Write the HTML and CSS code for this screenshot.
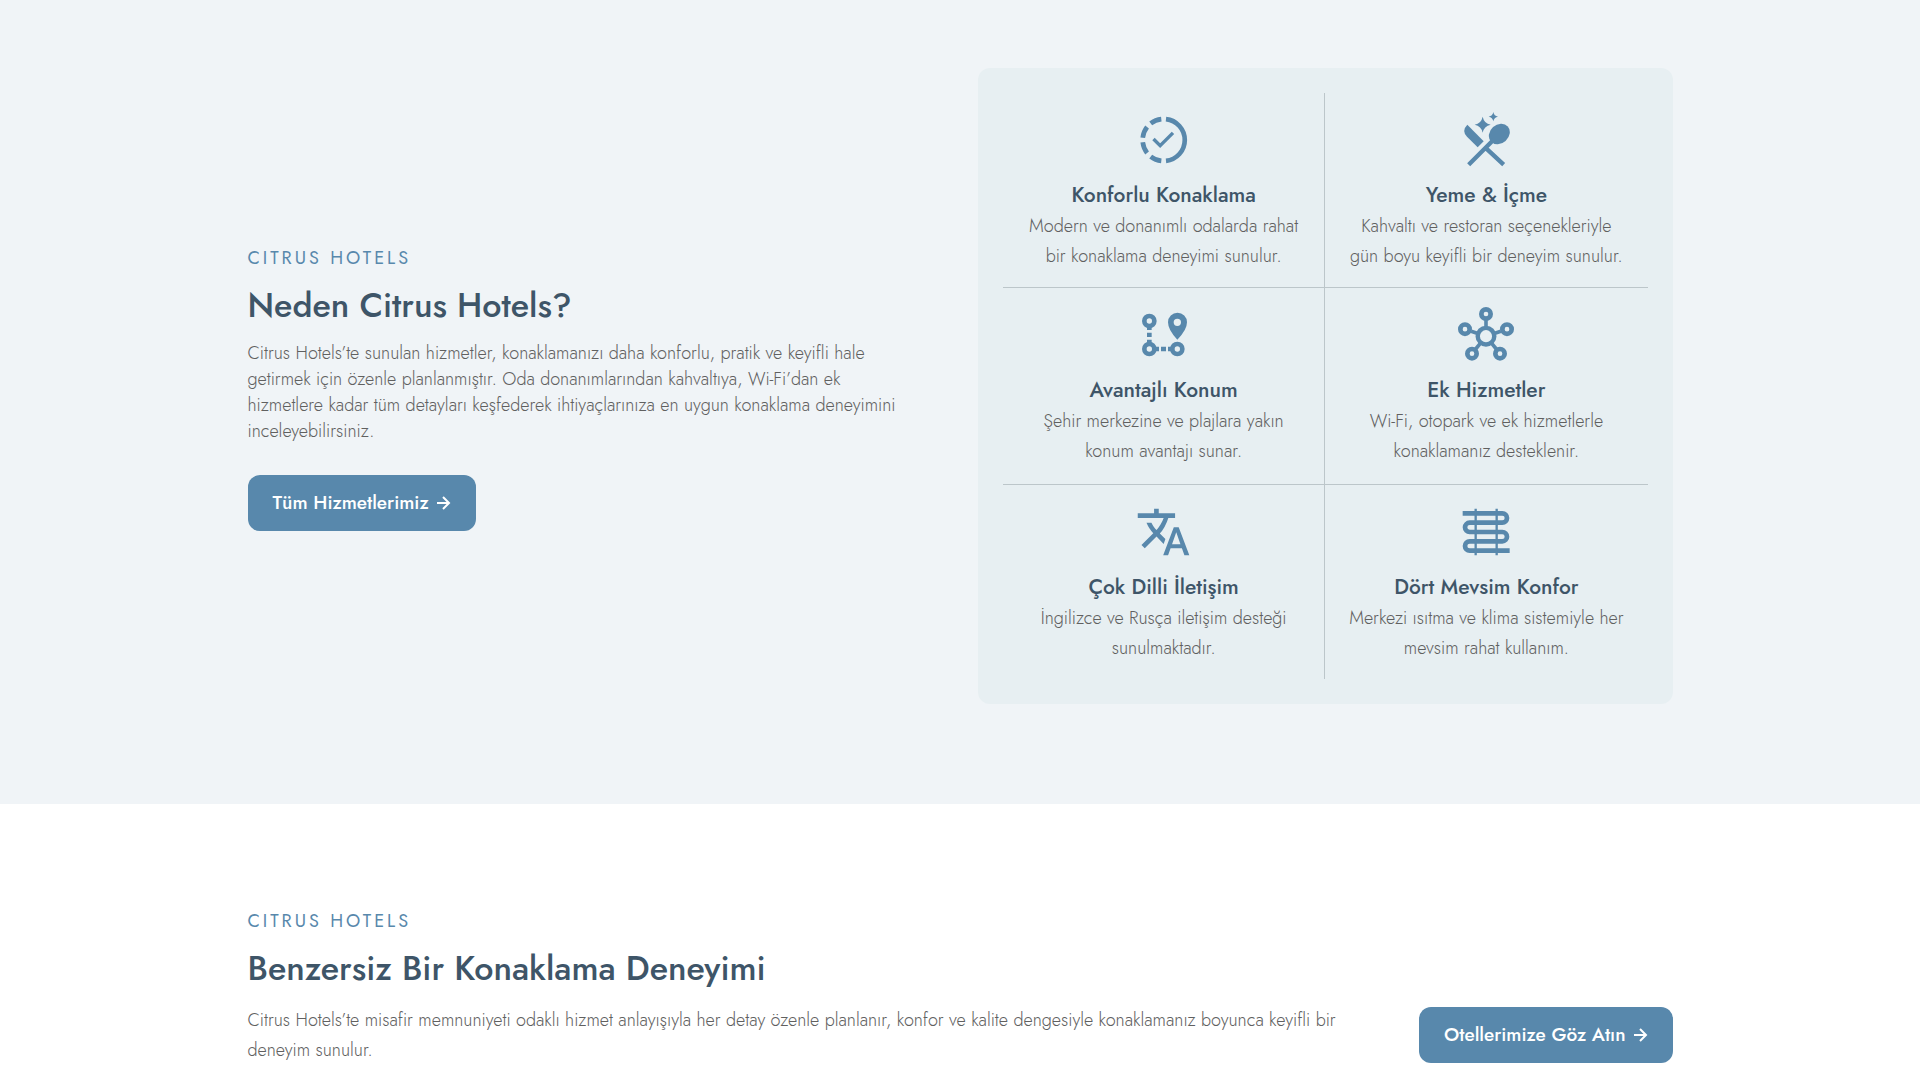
FILE: index.html
```html
<!DOCTYPE html>
<html lang="tr">
<head>
<meta charset="utf-8">
<meta name="viewport" content="width=device-width, initial-scale=1">
<title>Citrus Hotels</title>
<link rel="stylesheet" href="styles.css">
</head>
<body>
<main>
  <section class="why">
    <div class="container why-grid">
      <div class="intro">
        <p class="eyebrow">CITRUS HOTELS</p>
        <h2 class="heading">Neden Citrus Hotels?</h2>
        <p class="lead">Citrus Hotels’te sunulan hizmetler, konaklamanızı daha konforlu, pratik ve keyifli hale getirmek için özenle planlanmıştır. Oda donanımlarından kahvaltıya, Wi-Fi’dan ek hizmetlere kadar tüm detayları keşfederek ihtiyaçlarınıza en uygun konaklama deneyimini inceleyebilirsiniz.</p>
        <a class="button" href="#">Tüm Hizmetlerimiz
          <svg class="arrow" viewBox="0 0 14 14" aria-hidden="true"><path d="M0 7H12M6 1L12 7L6 13"/></svg>
        </a>
      </div>
      <ul class="features">
        <li class="feature">
          <svg class="icon" viewBox="6 0 960 960" aria-hidden="true">
            <g class="line">
              <path stroke-width="80" d="M520 122A360 360 0 0 1 520 838M440 122A360 360 0 0 0 258 196M196 258A360 360 0 0 0 122 440M122 520A360 360 0 0 0 196 702M258 764A360 360 0 0 0 440 838"/>
              <path stroke-width="58" d="M306 464L420 578L640 358"/>
            </g>
          </svg>
          <h3 class="feature-title">Konforlu Konaklama</h3>
          <p class="feature-text">Modern ve donanımlı odalarda rahat bir konaklama deneyimi sunulur.</p>
        </li>
        <li class="feature">
          <svg class="icon" viewBox="54 51 168 168" aria-hidden="true">
            <path d="M82 89L131 139L113 157L81 125Q64 107 82 89Z"/>
            <ellipse cx="178" cy="117" rx="34" ry="28" transform="rotate(-42 178 117)"/>
            <path class="line" stroke-width="13" d="M160 135L86 209M136 158L191 209"/>
            <path d="M128 65Q132 85 152 89Q132 93 128 113Q124 93 104 89Q124 85 128 65ZM160 51Q162 63 174 65Q162 67 160 79Q158 67 146 65Q158 63 160 51Z"/>
          </svg>
          <h3 class="feature-title">Yeme &amp; İçme</h3>
          <p class="feature-text">Kahvaltı ve restoran seçenekleriyle gün boyu keyifli bir deneyim sunulur.</p>
        </li>
        <li class="feature">
          <svg class="icon" viewBox="48 36 168 168" aria-hidden="true">
            <g class="line" stroke-width="14">
              <circle cx="88" cy="78" r="15"/>
              <circle cx="88" cy="162" r="15"/>
              <circle cx="172" cy="162" r="15"/>
              <path d="M88 92V105M88 113V126M88 134V148M102 162H117M123 162H138M144 162H158"/>
            </g>
            <path fill-rule="evenodd" d="M172 134Q144 105 144 82A28 28 0 0 1 201 82Q201 105 172 134ZM172 71A11 11 0 1 0 172 93A11 11 0 1 0 172 71Z"/>
          </svg>
          <h3 class="feature-title">Avantajlı Konum</h3>
          <p class="feature-text">Şehir merkezine ve plajlara yakın konum avantajı sunar.</p>
        </li>
        <li class="feature">
          <svg class="icon" viewBox="0 0 960 960" aria-hidden="true">
            <g class="line">
              <circle cx="480" cy="500" r="142" stroke-width="76"/>
              <circle cx="480" cy="120" r="80" stroke-width="80"/>
              <circle cx="120" cy="380" r="80" stroke-width="80"/>
              <circle cx="840" cy="380" r="80" stroke-width="80"/>
              <circle cx="240" cy="800" r="80" stroke-width="80"/>
              <circle cx="720" cy="800" r="80" stroke-width="80"/>
              <path stroke-width="62" d="M480 220V340M225 415L340 454M735 415L620 454M304 720L382 622M656 720L578 622"/>
            </g>
          </svg>
          <h3 class="feature-title">Ek Hizmetler</h3>
          <p class="feature-text">Wi-Fi, otopark ve ek hizmetlerle konaklamanız desteklenir.</p>
        </li>
        <li class="feature">
          <svg class="icon" viewBox="10 -960 960 960" aria-hidden="true"><path d="m476-80 182-480h84L924-80h-84l-43-122H603L560-80h-84ZM160-200l-56-56 202-202q-35-35-63.500-80T190-640h84q20 39 40 68t48 58q33-33 68.500-92.500T484-720H40v-80h280v-80h80v80h280v80H564q-21 72-63 148t-83 116l96 98-30 82-122-125-202 201Zm468-72h144l-72-204-72 204Z"/></svg>
          <h3 class="feature-title">Çok Dilli İletişim</h3>
          <p class="feature-text">İngilizce ve Rusça iletişim desteği sunulmaktadır.</p>
        </li>
        <li class="feature">
          <svg class="icon" viewBox="55 27 168 168" aria-hidden="true">
            <path class="line" stroke-width="14" d="M69 55H188A14 14 0 0 1 188 83H90A14 14 0 0 0 90 111H188A14 14 0 0 1 188 139H90A14 14 0 0 0 90 167H210"/>
            <path class="line" stroke-width="7" d="M108 41V181M171 41V181"/>
          </svg>
          <h3 class="feature-title">Dört Mevsim Konfor</h3>
          <p class="feature-text">Merkezi ısıtma ve klima sistemiyle her mevsim rahat kullanım.</p>
        </li>
      </ul>
    </div>
  </section>
  <section class="stay">
    <div class="container stay-row">
      <div class="stay-copy">
        <p class="eyebrow">CITRUS HOTELS</p>
        <h2 class="heading">Benzersiz Bir Konaklama Deneyimi</h2>
        <p class="lead lead-wide">Citrus Hotels’te misafir memnuniyeti odaklı hizmet anlayışıyla her detay özenle planlanır, konfor ve kalite dengesiyle konaklamanız boyunca keyifli bir deneyim sunulur.</p>
      </div>
      <a class="button" href="#">Otellerimize Göz Atın
        <svg class="arrow" viewBox="0 0 14 14" aria-hidden="true"><path d="M0 7H12M6 1L12 7L6 13"/></svg>
      </a>
    </div>
  </section>
</main>
</body>
</html>
```
FILE: styles.css
```css
* {
  box-sizing: border-box;
  margin: 0;
  padding: 0;
}

body {
  background: #fff;
  color: #606060;
  font-family: Jost, Lato, sans-serif;
  font-size: 18px;
  font-weight: 300;
  line-height: 30px;
}

.container {
  width: 100%;
  max-width: 1473px;
  margin: 0 auto;
  padding: 0 24px;
}

.why {
  background: #f0f4f7;
  padding: 68px 0 100px;
}

.why-grid {
  display: grid;
  grid-template-columns: 1fr 1fr;
  gap: 36px;
  align-items: center;
}

.intro {
  padding-right: 30px;
}

.eyebrow {
  color: #5888ac;
  font-weight: 400;
  letter-spacing: 3px;
  line-height: 34px;
}

.heading {
  margin-top: 8px;
  color: #3e5568;
  font-size: 34px;
  font-weight: 500;
  line-height: 46px;
}

.lead {
  margin-top: 11px;
  line-height: 26px;
}

.lead-wide {
  margin-top: 13px;
  line-height: 30px;
}

.button {
  display: inline-flex;
  flex-shrink: 0;
  align-items: center;
  gap: 8px;
  height: 56px;
  padding: 0 25px;
  border-radius: 12px;
  background: #5888ac;
  color: #fff;
  font-size: 19px;
  font-weight: 500;
  text-decoration: none;
  white-space: nowrap;
}

.intro .button {
  margin-top: 31px;
}

.arrow {
  width: 14px;
  height: 14px;
  fill: none;
  stroke: currentColor;
  stroke-width: 2;
}

.features {
  display: grid;
  grid-template-columns: 1fr 1fr;
  padding: 25px;
  border-radius: 12px;
  background: #e7eff2;
  list-style: none;
}

.feature {
  display: flex;
  flex-direction: column;
  align-items: center;
  padding: 19px 20px 16px;
  border-bottom: 1px solid #bcc6ca;
  text-align: center;
}

.feature:nth-child(odd) {
  border-right: 1px solid #bcc6ca;
}

.feature:nth-child(3),
.feature:nth-child(4) {
  padding-bottom: 18px;
}

.feature:nth-last-child(-n + 2) {
  border-bottom: 0;
}

.icon {
  width: 56px;
  height: 56px;
  fill: #5888ac;
}

.icon .line {
  fill: none;
  stroke: #5888ac;
}

.feature-title {
  margin: 12px 0 1px;
  color: #3e5568;
  font-size: 21px;
  font-weight: 500;
  line-height: 30px;
}

.stay {
  padding: 100px 0 13px;
}

.stay-row {
  display: flex;
  align-items: flex-end;
  justify-content: space-between;
  gap: 60px;
}

.stay .button {
  margin-bottom: 2px;
}

@media (max-width: 1000px) {
  .why-grid {
    grid-template-columns: 1fr;
  }

  .stay-row {
    flex-direction: column;
    align-items: flex-start;
    gap: 24px;
  }
}
```
